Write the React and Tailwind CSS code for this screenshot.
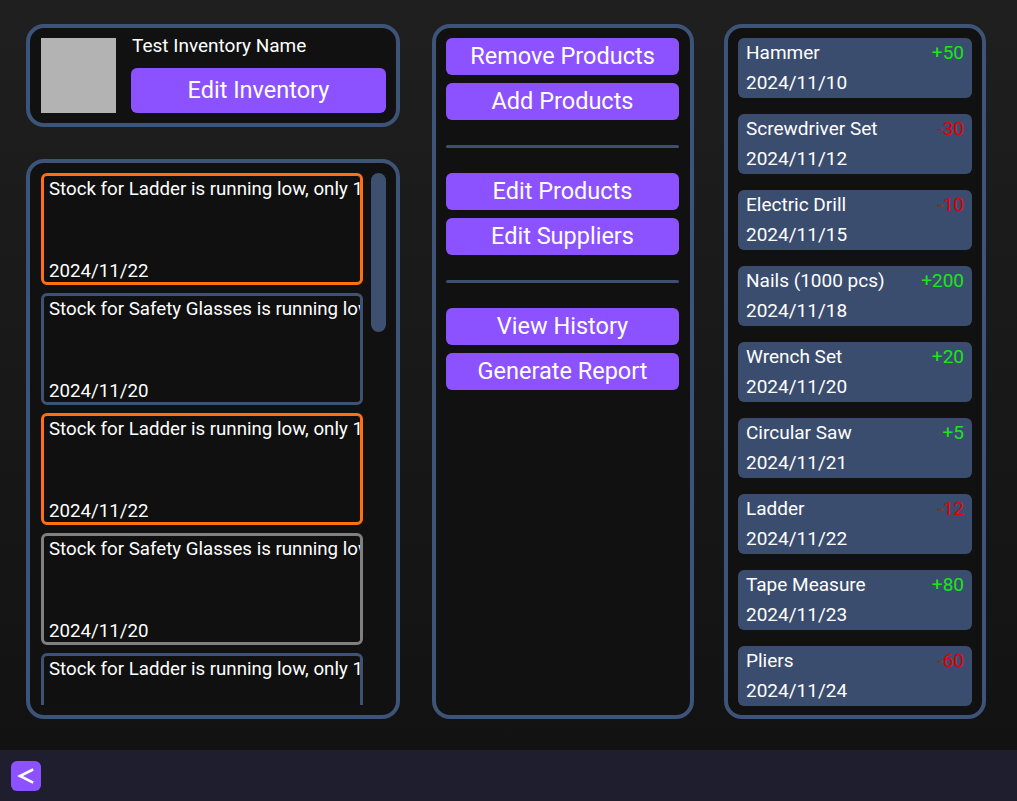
import React from "react";

const alerts = [
  { text: "Stock for Ladder is running low, only 1", date: "2024/11/22", border: "border-[#ff7010]" },
  { text: "Stock for Safety Glasses is running low", date: "2024/11/20", border: "border-[#3d5275]" },
  { text: "Stock for Ladder is running low, only 1", date: "2024/11/22", border: "border-[#ff7010]" },
  { text: "Stock for Safety Glasses is running low", date: "2024/11/20", border: "border-[#808080]" },
  { text: "Stock for Ladder is running low, only 1", date: "2024/11/22", border: "border-[#3d5275]" },
];

const history = [
  { name: "Hammer", date: "2024/11/10", amount: "+50" },
  { name: "Screwdriver Set", date: "2024/11/12", amount: "-30" },
  { name: "Electric Drill", date: "2024/11/15", amount: "-10" },
  { name: "Nails (1000 pcs)", date: "2024/11/18", amount: "+200" },
  { name: "Wrench Set", date: "2024/11/20", amount: "+20" },
  { name: "Circular Saw", date: "2024/11/21", amount: "+5" },
  { name: "Ladder", date: "2024/11/22", amount: "-12" },
  { name: "Tape Measure", date: "2024/11/23", amount: "+80" },
  { name: "Pliers", date: "2024/11/24", amount: "-60" },
];

function ActionButton({ label }) {
  return (
    <button className="h-[37px] w-full rounded-[6px] bg-[#8c52ff] text-[23.5px] leading-none text-white">
      {label}
    </button>
  );
}

function Divider() {
  return <div className="my-[25px] h-[3px] w-full rounded-full bg-[#3d5070]" />;
}

function App() {
  return (
    <div
      className="flex h-[801px] w-[1017px] flex-col overflow-hidden"
      style={{ fontFamily: "Roboto, 'Liberation Sans', sans-serif" }}
    >
      <div className="flex h-[750px] bg-gradient-to-b from-[#1f1f1f] to-[#121212] pl-[26px] pt-[24px]">
        {/* Left column */}
        <div className="flex w-[374px] flex-col gap-[32px]">
          {/* Inventory card */}
          <div className="flex h-[103px] items-start gap-[15px] rounded-[18px] border-4 border-[#3d5478] bg-[#111111] pl-[11px] pr-[10px] pt-[10px]">
            <div className="h-[75px] w-[75px] shrink-0 bg-[#b3b3b3]" />
            <div className="flex flex-1 flex-col">
              <div className="h-[30px] pl-[1px] text-[19px] leading-[16px] text-white">Test Inventory Name</div>
              <button className="h-[45px] w-full rounded-[6px] bg-[#8c52ff] text-[23.5px] text-white">
                Edit Inventory
              </button>
            </div>
          </div>

          {/* Alerts */}
          <div className="flex h-[560px] gap-[8px] rounded-[18px] border-4 border-[#3d5478] bg-[#111111] pb-[10px] pl-[11px] pr-[10px] pt-[10px]">
            <div className="flex w-[322px] flex-col gap-[8px] overflow-hidden">
              {alerts.map((a, i) => (
                <div
                  key={i}
                  className={`flex h-[112px] shrink-0 flex-col justify-between overflow-hidden rounded-[6px] border-[3px] bg-[#101010] pl-[5px] pt-[2px] ${a.border}`}
                >
                  <div className="overflow-hidden whitespace-nowrap text-[18.7px] leading-[22px] text-white">{a.text}</div>
                  <div className="text-[18.7px] leading-[22px] text-white">{a.date}</div>
                </div>
              ))}
            </div>
            <div className="h-[159px] w-[15px] rounded-full bg-[#3d5070]" />
          </div>
        </div>

        {/* Middle column */}
        <div className="ml-[32px] flex h-[695px] w-[262px] flex-col rounded-[18px] border-4 border-[#3d5478] bg-[#111111] pl-[10px] pr-[11px] pt-[10px]">
          <div className="flex flex-col gap-[8px]">
            <ActionButton label="Remove Products" />
            <ActionButton label="Add Products" />
          </div>
          <Divider />
          <div className="flex flex-col gap-[8px]">
            <ActionButton label="Edit Products" />
            <ActionButton label="Edit Suppliers" />
          </div>
          <Divider />
          <div className="flex flex-col gap-[8px]">
            <ActionButton label="View History" />
            <ActionButton label="Generate Report" />
          </div>
        </div>

        {/* Right column */}
        <div className="ml-[30px] flex h-[695px] w-[262px] flex-col gap-[16px] rounded-[18px] border-4 border-[#3d5478] bg-[#111111] px-[10px] pt-[10px]">
          {history.map((h) => (
            <div
              key={h.name}
              className="flex h-[60px] shrink-0 flex-col justify-center rounded-[6px] bg-[#3b4d6e] px-[8px]"
            >
              <div className="flex items-center justify-between text-[19px] leading-[30px]">
                <span className="text-white">{h.name}</span>
                <span className={h.amount.startsWith("+") ? "text-[#19e619]" : "text-[#e60000]"}>{h.amount}</span>
              </div>
              <div className="text-[19px] leading-[30px] text-white">{h.date}</div>
            </div>
          ))}
        </div>
      </div>

      {/* Bottom bar */}
      <div className="flex h-[51px] items-center bg-[#1e1e2e] pl-[11px]">
        <button className="flex h-[30px] w-[30px] items-center justify-center rounded-[6px] bg-[#8c52ff]">
          <svg width="18" height="16" viewBox="0 0 18 16" fill="none">
            <path d="M15 2 L3 8 L15 14" stroke="white" strokeWidth="2.6" strokeLinecap="square" strokeLinejoin="miter" />
          </svg>
        </button>
      </div>
    </div>
  );
}

export default App;
